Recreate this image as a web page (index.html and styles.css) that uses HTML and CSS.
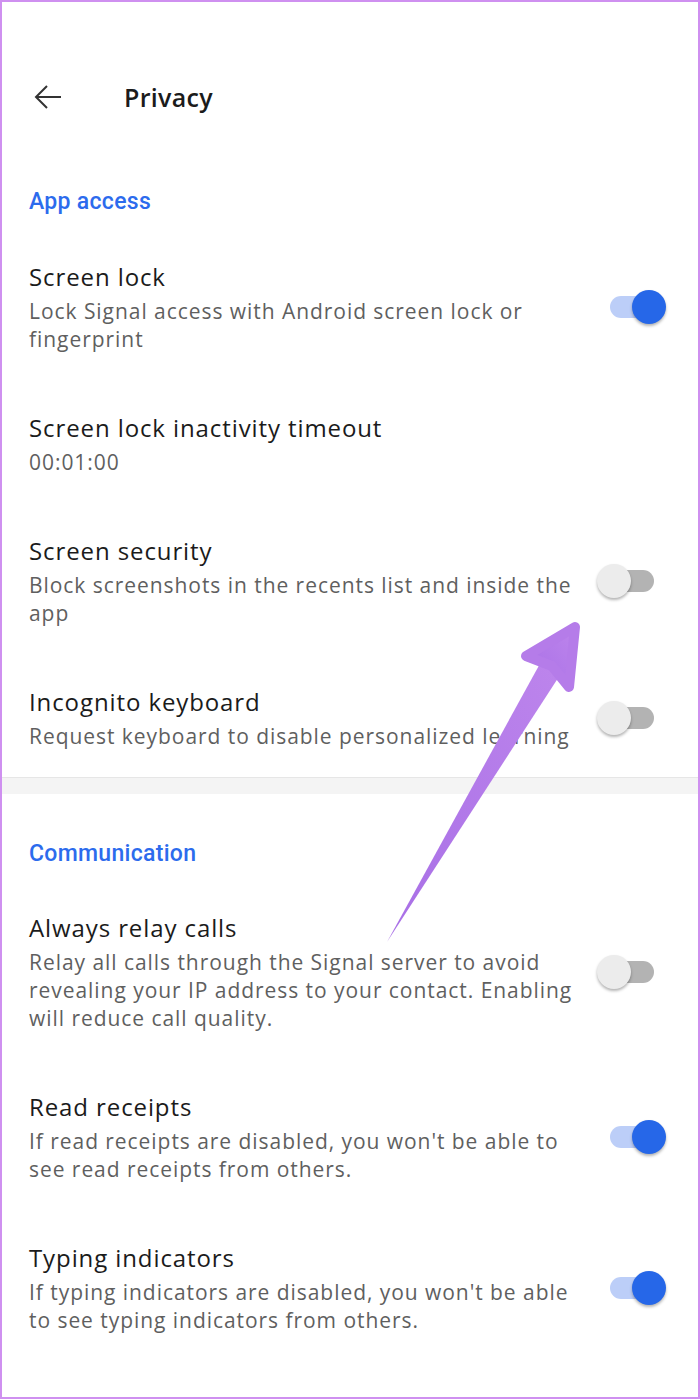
FILE: index.html
```html
<!DOCTYPE html>
<html lang="en">
<head>
  <meta charset="UTF-8">
  <meta name="viewport" content="width=device-width, initial-scale=1.0">
  <title>Privacy</title>
  <link rel="stylesheet" href="styles.css">
</head>
<body>
  <div class="screen">
    <div class="toolbar">
      <div class="back-button">
        <svg xmlns="http://www.w3.org/2000/svg" viewBox="0 0 32 32">
          <path d="M29 16H4M15 5 4 16l11 11" />
        </svg>
      </div>
      <h1>Privacy</h1>
    </div>

    <div class="section">
      <h2>App access</h2>

      <div class="row">
        <div class="text">
          <div class="title">Screen lock</div>
          <div class="desc">Lock Signal access with Android screen lock or fingerprint</div>
        </div>
        <div class="switch on"><span class="knob"></span></div>
      </div>

      <div class="row">
        <div class="text">
          <div class="title">Screen lock inactivity timeout</div>
          <div class="desc">00:01:00</div>
        </div>
      </div>

      <div class="row">
        <div class="text">
          <div class="title">Screen security</div>
          <div class="desc">Block screenshots in the recents list and inside the app</div>
        </div>
        <div class="switch"><span class="knob"></span></div>
      </div>

      <div class="row last">
        <div class="text">
          <div class="title">Incognito keyboard</div>
          <div class="desc">Request keyboard to disable personalized learning</div>
        </div>
        <div class="switch"><span class="knob"></span></div>
      </div>
    </div>

    <div class="divider"></div>

    <div class="section">
      <h2 class="second">Communication</h2>

      <div class="row">
        <div class="text">
          <div class="title">Always relay calls</div>
          <div class="desc">Relay all calls through the Signal server to avoid revealing your IP address to your contact. Enabling will reduce call quality.</div>
        </div>
        <div class="switch"><span class="knob"></span></div>
      </div>

      <div class="row">
        <div class="text">
          <div class="title">Read receipts</div>
          <div class="desc">If read receipts are disabled, you won't be able to see read receipts from others.</div>
        </div>
        <div class="switch on"><span class="knob"></span></div>
      </div>

      <div class="row">
        <div class="text">
          <div class="title">Typing indicators</div>
          <div class="desc">If typing indicators are disabled, you won't be able to see typing indicators from others.</div>
        </div>
        <div class="switch on"><span class="knob"></span></div>
      </div>
    </div>

    <!-- annotation arrow -->
    <svg class="annotation" xmlns="http://www.w3.org/2000/svg" viewBox="0 0 700 1399">
      <defs>
        <linearGradient id="arrowFill" x1="0" y1="1" x2="1" y2="0">
          <stop offset="0" stop-color="#a86fe6" />
          <stop offset="1" stop-color="#bd85ec" />
        </linearGradient>
      </defs>
      <polygon points="387,942 542,660 562,672" fill="url(#arrowFill)" />
      <polygon points="526,656 575,627 569,687 552,666" fill="url(#arrowFill)" stroke="#b57ce9" stroke-width="10" stroke-linejoin="round" />
    </svg>
  </div>
</body>
</html>
```

FILE: styles.css
```css
html, body {
  margin: 0;
  padding: 0;
  background: #fff;
}
.screen {
  position: relative;
  min-height: 1399px;
  box-sizing: border-box;
  border: 2px solid #cf90f0;
  font-family: 'Open Sans', 'Liberation Sans', sans-serif;
  color: #1b1b1b;
  overflow: hidden;
}
.toolbar {
  display: flex;
  align-items: center;
  height: 34px;
  padding-top: 78px;
  padding-left: 30px;
}
.back-button {
  display: flex;
  align-items: center;
  width: 34px;
  height: 34px;
}
.back-button svg {
  width: 32px;
  height: 32px;
  fill: none;
  stroke: #333;
  stroke-width: 2;
}
h1 {
  margin: 0 0 0 58px;
  font-size: 25px;
  font-weight: 600;
  letter-spacing: 0.3px;
}
.section {
  padding: 0 0 0 27px;
}
h2 {
  margin: 73px 0 14px;
  font-family: 'Roboto', 'Liberation Sans', sans-serif;
  font-size: 23px;
  line-height: 30px;
  font-weight: 500;
  letter-spacing: 0.3px;
  color: #2c6bed;
}
h2.second {
  margin-top: 45px;
  margin-bottom: 13px;
}
.row {
  display: flex;
  align-items: center;
  padding: 29px 0;
}
.row.last {
  padding-bottom: 27px;
}
.text {
  width: 545px;
}
.title {
  font-size: 24px;
  line-height: 34px;
  letter-spacing: 0.9px;
}
.desc {
  margin-top: 3px;
  font-size: 21px;
  line-height: 28px;
  letter-spacing: 0.95px;
  color: #5f5f5f;
}
.switch {
  position: relative;
  margin-left: 36px;
  width: 44px;
  height: 22px;
  border-radius: 11px;
  background: #b3b3b3;
}
.switch .knob {
  position: absolute;
  top: -6px;
  left: -13px;
  width: 34px;
  height: 34px;
  border-radius: 50%;
  background: #ececec;
  box-shadow: 0 2px 3px rgba(0, 0, 0, 0.3);
}
.switch.on {
  background: #bccef8;
}
.switch.on .knob {
  left: 22px;
  background: #2667e8;
}
.divider {
  height: 16px;
  background: #f4f4f4;
  border-top: 1px solid #e6e6e6;
}
.annotation {
  position: absolute;
  top: -2px;
  left: -2px;
  width: 700px;
  height: 1399px;
  pointer-events: none;
}
```
